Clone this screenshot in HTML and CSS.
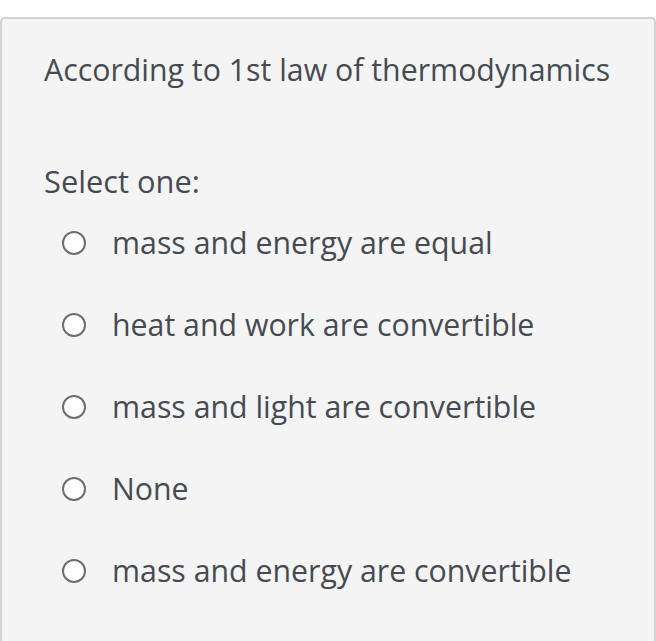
FILE: index.html
```html
<!DOCTYPE html>
<html lang="en">
<head>
<meta charset="utf-8">
<link rel="stylesheet" href="styles.css">
<title>Question</title>
</head>
<body>
<div class="card">
  <div class="qtext">According to 1st law of thermodynamics</div>
  <div class="prompt">Select one:</div>
  <div class="answers">
    <label class="opt"><span class="radio"></span><span class="lbl">mass and energy are equal</span></label>
    <label class="opt"><span class="radio"></span><span class="lbl">heat and work are convertible</span></label>
    <label class="opt"><span class="radio"></span><span class="lbl">mass and light are convertible</span></label>
    <label class="opt"><span class="radio"></span><span class="lbl">None</span></label>
    <label class="opt"><span class="radio"></span><span class="lbl">mass and energy are convertible</span></label>
  </div>
</div>
</body>
</html>
```
FILE: styles.css
```css
html, body {
  margin: 0;
  padding: 0;
  background: #ffffff;
}
body {
  font-family: "Open Sans", Lato, sans-serif;
  color: #464b52;
  width: 656px;
  height: 641px;
  overflow: hidden;
}
.card {
  margin-top: 17px;
  box-sizing: border-box;
  width: 656px;
  height: 640px;
  background: #f4f4f4;
  border: 2px solid #d2d2d2;
  border-bottom: none;
  border-radius: 5px 5px 0 0;
  padding: 31px 0 0 42px;
}
.qtext {
  font-size: 30.3px;
  line-height: 40px;
}
.prompt {
  font-size: 30.8px;
  line-height: 40px;
  margin-top: 71px;
}
.answers {
  display: flex;
  flex-direction: column;
  margin-top: 1px;
}
.opt {
  display: flex;
  align-items: center;
  height: 82px;
}
.radio {
  box-sizing: border-box;
  width: 24px;
  height: 24px;
  border-radius: 50%;
  border: 2.5px solid #6e6e6e;
  background: #ffffff;
  margin-left: 18px;
  margin-right: 26px;
  flex: none;
}
.lbl {
  font-size: 30.3px;
  line-height: 40px;
}
```
